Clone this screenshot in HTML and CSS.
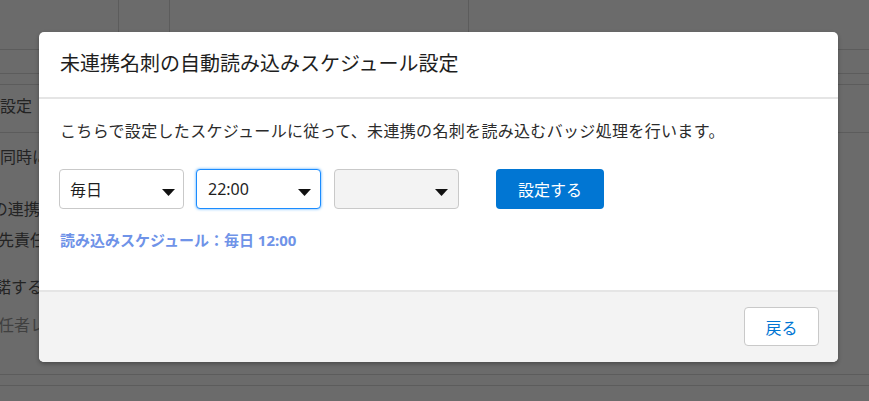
FILE: index.html
```html
<!DOCTYPE html>
<html lang="ja">
<head>
<meta charset="utf-8">
<title>未連携名刺の自動読み込みスケジュール設定</title>
<link rel="stylesheet" href="styles.css">
</head>
<body>
<div class="page">
  <div class="topbar">
    <div class="tcell c1"></div>
    <div class="tcell c2"></div>
    <div class="tcell c3"></div>
    <div class="tcell c4"></div>
  </div>
  <div class="band b1"></div>
  <div class="band b2"></div>
  <div class="rows">
    <div class="row r1"><span>設定</span></div>
    <div class="row r2"><span>同時に</span></div>
    <div class="row r3"><span class="cut2">との連携</span></div>
    <div class="row r4"><span class="cut">先責任</span></div>
    <div class="row r5"><span class="cut3">諾する</span></div>
    <div class="row r6 light"><span class="cut">任者レ</span></div>
  </div>
  <div class="band b3"></div>
  <div class="band b4"></div>
</div>

<div class="overlay">
  <div class="modal">
    <div class="modal-header">
      <h2 class="modal-title">未連携名刺の自動読み込みスケジュール設定</h2>
    </div>
    <div class="modal-body">
      <p class="desc">こちらで設定したスケジュールに従って、未連携の名刺を読み込むバッジ処理を行います。</p>
      <div class="controls">
        <div class="select first">
          <span class="select-value">毎日</span>
          <svg class="arrow" width="13" height="7" viewBox="0 0 13 7"><path d="M0 0 H13 L6.5 7 Z" fill="#111"/></svg>
        </div>
        <div class="select focused">
          <span class="select-value">22:00</span>
          <svg class="arrow" width="13" height="7" viewBox="0 0 13 7"><path d="M0 0 H13 L6.5 7 Z" fill="#111"/></svg>
        </div>
        <div class="select disabled">
          <span class="select-value"></span>
          <svg class="arrow" width="13" height="7" viewBox="0 0 13 7"><path d="M0 0 H13 L6.5 7 Z" fill="#111"/></svg>
        </div>
        <button class="btn-brand" type="button">設定する</button>
      </div>
      <p class="status">読み込みスケジュール：毎日 12:00</p>
    </div>
    <div class="modal-footer">
      <button class="btn-neutral" type="button">戻る</button>
    </div>
  </div>
</div>
</body>
</html>
```

FILE: styles.css
```css
* { box-sizing: border-box; }

html, body {
  margin: 0;
  padding: 0;
  width: 869px;
  height: 401px;
  overflow: hidden;
  background: #ffffff;
  font-family: "Noto Sans", "Noto Sans CJK JP", sans-serif;
}

/* background page */
.page {
  width: 869px;
  height: 401px;
  color: #555;
}
.topbar {
  display: flex;
  height: 50px;
  border-bottom: 1px solid #dcdcdc;
}
.tcell { height: 100%; border-right: 1px solid #dcdcdc; }
.c1 { width: 119px; }
.c2 { width: 51px; }
.c3 { width: 299px; }
.c4 { flex: 1; border-right: none; }

.band { border-bottom: 1px solid #dcdcdc; }
.b1 { height: 24px; }
.b2 { height: 11px; }

.rows { height: 289px; overflow: hidden; }
.row {
  font-size: 16px;
  line-height: 22px;
  white-space: nowrap;
}
.row span { display: inline-block; }
.r1 { padding-top: 10px; height: 48px; border-bottom: 1px solid #dcdcdc; }
.r2 { padding-top: 13px; height: 35px; }
.r3 { padding-top: 30px; height: 52px; }
.r4 { padding-top: 9px; height: 31px; }
.r5 { padding-top: 25px; height: 47px; }
.r6 { padding-top: 16px; height: 38px; }
.light { color: #9a9a9a; }
.cut { margin-left: -2px; }
.cut2 { margin-left: -24px; }
.cut3 { margin-left: -5px; }

.b3 { height: 1px; }
.b4 { height: 11px; }

/* overlay + modal */
.overlay {
  position: absolute;
  inset: 0;
  background: rgba(0, 0, 0, 0.58);
}
.modal {
  position: absolute;
  left: 39px;
  top: 32px;
  width: 799px;
  height: 330px;
  background: #fff;
  border-radius: 5px;
  box-shadow: 0 2px 4px rgba(0, 0, 0, 0.3);
  display: flex;
  flex-direction: column;
  overflow: hidden;
}
.modal-header {
  height: 67px;
  border-bottom: 2px solid #e5e5e5;
  padding: 0 21px;
  display: flex;
  align-items: center;
}
.modal-title {
  margin: 0;
  font-size: 20px;
  font-weight: 400;
  color: #1e1e1e;
  line-height: 28px;
  margin-top: -2px;
}
.modal-body {
  padding: 20px 20px 0 21px;
  height: 191px;
}
.desc {
  margin: 0;
  font-size: 16px;
  line-height: 24px;
  color: #2b2b2b;
  letter-spacing: 0.33px;
}
.controls {
  display: flex;
  align-items: center;
  margin-top: 26px;
  margin-left: -1px;
}
.select {
  width: 125px;
  height: 40px;
  border: 1px solid #c9c9c9;
  border-radius: 4px;
  background: #fff;
  display: flex;
  align-items: center;
  justify-content: space-between;
  padding: 0 8px 0 10px;
  margin-right: 13px;
  font-size: 16px;
  color: #1e1e1e;
}
.select.first { margin-right: 12px; }
.select .arrow { margin-top: 6px; }
.select.focused {
  border-color: #1b8cff;
  box-shadow: 0 0 3px #4aa6ff;
  padding: 0 9px 0 11px;
}
.select.disabled {
  background: #f3f3f3;
  border-color: #c9c9c9;
  margin-right: 37px;
  padding-right: 10px;
}
.btn-brand {
  width: 108px;
  height: 40px;
  border: none;
  border-radius: 4px;
  background: #0176d3;
  color: #fff;
  font-family: inherit;
  font-size: 16px;
  padding: 0;
}
.status {
  margin: 21px 0 0;
  font-size: 15px;
  line-height: 20px;
  font-weight: 700;
  color: #6f93e8;
}
.modal-footer {
  flex: 1;
  background: #f3f3f3;
  border-top: 2px solid #e5e5e5;
  display: flex;
  justify-content: flex-end;
  align-items: flex-start;
  padding: 15px 19px 0 0;
}
.btn-neutral {
  width: 75px;
  height: 39px;
  border: 1px solid #c9c9c9;
  border-radius: 4px;
  background: #fff;
  color: #0176d3;
  font-family: inherit;
  font-size: 16px;
  padding: 0;
}
```
